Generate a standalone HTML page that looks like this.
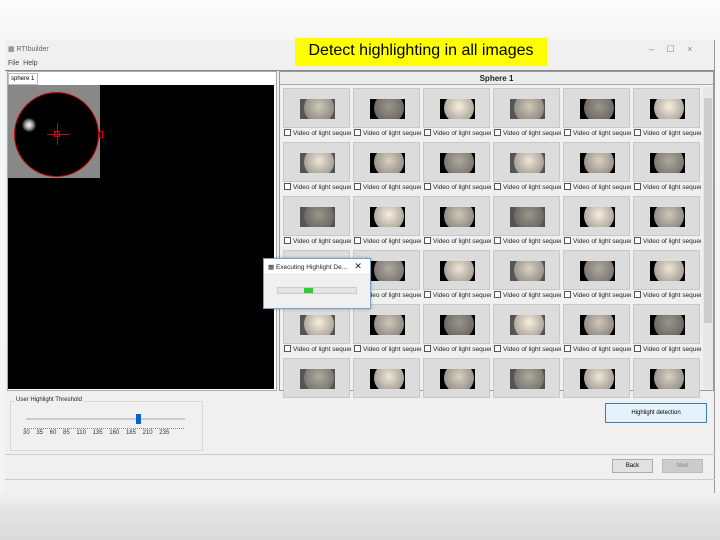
<!DOCTYPE html>
<html><head><meta charset="utf-8"><style>
*{margin:0;padding:0;box-sizing:border-box}
body{width:720px;height:540px;overflow:hidden;position:relative;font-family:"Liberation Sans",sans-serif;background:linear-gradient(#fcfcfc 0,#f6f6f6 40px,#f4f4f4 490px,#e4e4e4 510px,#dadada 540px)}
.a{position:absolute}
.win{left:5px;top:40px;width:710px;height:453px;background:#f0f0f0;border-right:1px solid #999}
.cell{position:absolute;width:69px;height:54px}
.th{position:absolute;left:1px;top:1px;width:67px;height:40px;background:#dcdcdc;border:1px solid #c8c8c8}
.img{position:absolute;left:16px;top:10px;width:35px;height:20px;background:#000;overflow:hidden}
.img i{position:absolute;left:4px;top:-6px;width:30px;height:30px;border-radius:50%;background:radial-gradient(circle at 50% 45%,#cfc8b8,#8a8680 75%)}
.lb{position:absolute;left:2px;top:42px;font-size:6.5px;color:#222;white-space:nowrap;overflow:hidden;width:67px;line-height:10px}
.lb b{display:inline-block;width:7px;height:7px;border:1px solid #555;vertical-align:-1px;margin-right:2px;background:#fff}
</style></head><body>
<div class="a win"></div>
<div class="a" style="left:8px;top:45px;font-size:7px;color:#666">▦ RTIbuilder</div>
<div class="a" style="left:8px;top:60px;font-size:7px;color:#444">File&nbsp; Help</div>
<div class="a" style="left:649px;top:44px;font-size:9px;color:#888">–&nbsp;&nbsp;&nbsp;&nbsp;&nbsp;☐&nbsp;&nbsp;&nbsp;&nbsp;&nbsp;×</div>
<div class="a" style="left:295px;top:38px;width:252px;height:28px;background:#ffff00;font-size:16px;color:#000;text-align:center;line-height:26px">Detect highlighting in all images</div>
<div class="a" style="left:5px;top:70px;width:710px;height:1px;background:#888"></div>
<!-- left -->
<div class="a" style="left:7px;top:71px;width:270px;height:320px;background:#fff;border:1px solid #aaa"></div>
<div class="a" style="left:8px;top:73px;width:30px;height:12px;border:1px solid #bbb;background:#fff;font-size:6px;line-height:10px;padding-left:2px">sphere 1</div>
<div class="a" style="left:8px;top:85px;width:266px;height:304px;background:#000"></div>
<div class="a" style="left:8px;top:85px;width:92px;height:93px;background:#888"></div>
<div class="a" style="left:14px;top:92px;width:85px;height:85px;border-radius:50%;background:#000;border:1px solid #c00"></div>
<div class="a" style="left:22px;top:118px;width:14px;height:14px;border-radius:50%;background:radial-gradient(#fff,#999 40%,#000 75%)"></div>
<div class="a" style="left:57px;top:123px;width:1px;height:22px;background:#d00"></div>
<div class="a" style="left:47px;top:134px;width:22px;height:1px;background:#d00"></div>
<div class="a" style="left:54px;top:131px;width:6px;height:6px;border:1px solid #d00"></div>
<div class="a" style="left:99px;top:131px;width:4px;height:7px;border:1px solid #d00"></div>
<!-- right -->
<div class="a" style="left:279px;top:71px;width:435px;height:320px;background:#f0f0f0;border:1px solid #999"></div>
<div class="a" style="left:280px;top:72px;width:433px;height:13px;background:#ececec;border-bottom:1px solid #aaa;font-size:8px;font-weight:bold;text-align:center;line-height:13px;color:#222">Sphere 1</div>
<div class="a" style="left:703px;top:87px;width:10px;height:302px;background:#e8e8e8"></div>
<div class="a" style="left:704px;top:98px;width:8px;height:225px;background:#cdcdcd"></div>
<div id="g"></div>
<!-- dialog -->
<div class="a" style="left:263px;top:258px;width:108px;height:51px;background:#f0f0f0;border:1px solid #7aa0c8;box-shadow:0 0 3px rgba(0,0,0,.3)"></div>
<div class="a" style="left:264px;top:259px;width:106px;height:14px;background:#fff;font-size:6.5px;line-height:14px;padding-left:4px;color:#222">▦ Executing Highlight De...&nbsp;&nbsp;&nbsp;&nbsp;<span style="font-size:9px">✕</span></div>
<div class="a" style="left:277px;top:287px;width:80px;height:7px;background:#e4e4e4;border:1px solid #ccc"></div>
<div class="a" style="left:304px;top:288px;width:9px;height:5px;background:#3c3"></div>
<!-- bottom -->
<div class="a" style="left:10px;top:401px;width:193px;height:50px;border:1px solid #d8d8d8"></div>
<div class="a" style="left:14px;top:397px;font-size:6px;background:#f0f0f0;color:#222;padding:0 2px">User Highlight Threshold</div>
<div class="a" style="left:26px;top:418px;width:159px;height:2px;background:#ccc"></div>
<div class="a" style="left:136px;top:414px;width:5px;height:10px;background:#0a64c8"></div>
<div class="a" style="left:24px;top:428px;width:160px;border-top:1px dotted #888;height:2px"></div>
<div class="a" style="left:23px;top:430px;font-size:6px;color:#333;word-spacing:5px">30 35 60 85 110 135 160 185 210 235</div>
<div class="a" style="left:605px;top:403px;width:102px;height:20px;background:#e5f1fb;border:1px solid #3c7fb1;font-size:6px;text-align:center;line-height:18px">Highlight detection</div>
<div class="a" style="left:5px;top:454px;width:710px;height:1px;background:#ccc"></div>
<div class="a" style="left:612px;top:459px;width:41px;height:14px;background:#e1e1e1;border:1px solid #adadad;font-size:6px;text-align:center;line-height:12px">Back</div>
<div class="a" style="left:662px;top:459px;width:41px;height:14px;background:#ccc;border:1px solid #bbb;font-size:6px;text-align:center;line-height:12px;color:#888">Next</div>
<div class="a" style="left:5px;top:479px;width:710px;height:1px;background:#ccc"></div>
<script>
var h='';for(var r=0;r<6;r++)for(var c=0;c<6;c++){var x=282+c*70,y=87+r*54;var gv=[0,15,-25,5,20,-15][(r+c*2)%6];
h+='<div class="cell" style="left:'+x+'px;top:'+y+'px"><div class="th"><div class="img" style="background:'+(c%3==0?'#555':'#000')+'"><i style="filter:brightness('+(1+gv/100)+')"></i></div></div>'+(r<5?'<div class="lb"><b></b>Video of light sequenc</div>':'')+'</div>';}
document.getElementById('g').innerHTML=h;
</script>
</body></html>
